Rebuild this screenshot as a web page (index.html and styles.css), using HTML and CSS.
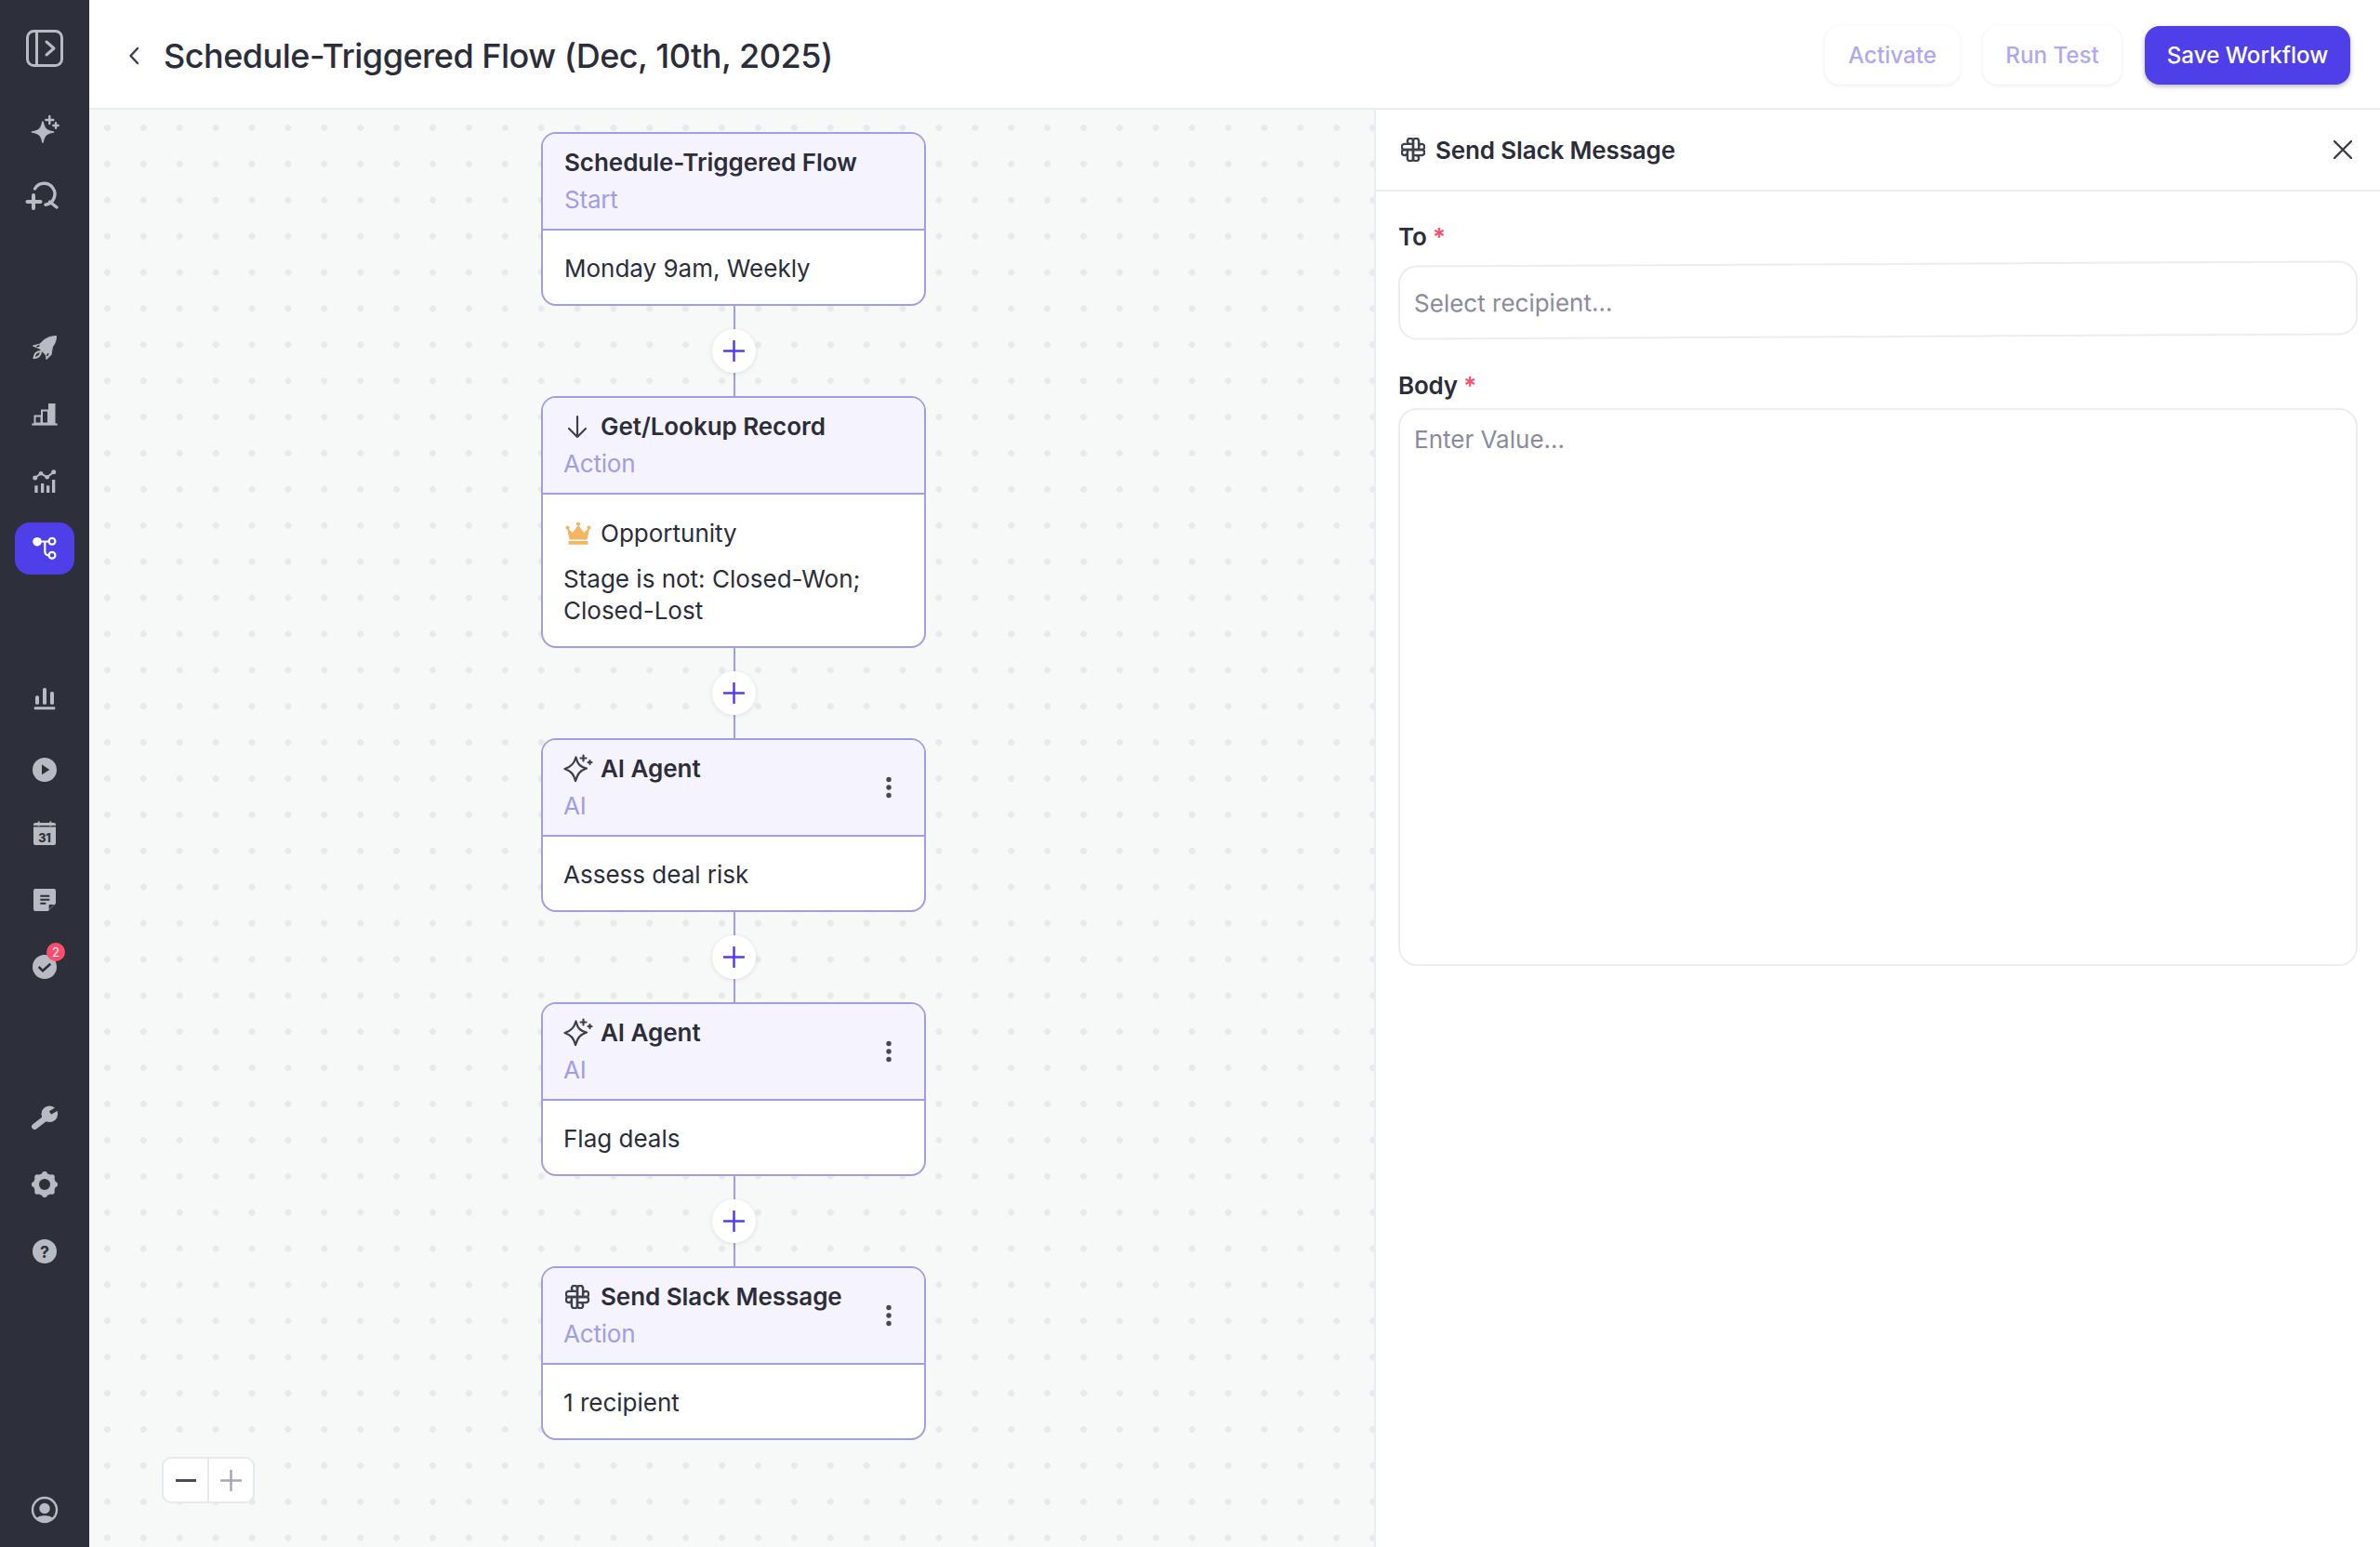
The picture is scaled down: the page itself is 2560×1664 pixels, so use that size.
FILE: index.html
```html
<!DOCTYPE html>
<html lang="en">
<head>
    <meta charset="UTF-8">
    <title>Schedule-Triggered Flow</title>
    <link rel="stylesheet" href="styles.css">
</head>
<body>
    <svg class="defs" width="0" height="0">
        <symbol id="slack" viewBox="3.5 3.5 17 17">
            <g fill="none" stroke="currentColor" stroke-width="1.6" stroke-linecap="round" stroke-linejoin="round">
                <path d="M12 12v-6a2 2 0 0 1 4 0v6m0 -2a2 2 0 1 1 2 2h-6"/>
                <path d="M12 12h6a2 2 0 0 1 0 4h-6m2 0a2 2 0 1 1 -2 2v-6"/>
                <path d="M12 12v6a2 2 0 0 1 -4 0v-6m0 2a2 2 0 1 1 -2 -2h6"/>
                <path d="M12 12h-6a2 2 0 0 1 0 -4h6m-2 0a2 2 0 1 1 2 -2v6"/>
            </g>
        </symbol>
        <symbol id="sparkle" viewBox="0 0 32 32">
            <path d="M13.5 3.5 C15 10 17 13.5 25 15.5 C17.5 18 15.5 21 13 29 C11 21.5 8.5 18.5 1.5 16 C8.5 14 11.5 10.5 13.5 3.5Z" fill="none" stroke="currentColor" stroke-width="2.3" stroke-linejoin="round"/>
            <path d="M21.5 1.5v6M18.5 4.5h6M28.5 7v4M26.5 9h4" fill="none" stroke="currentColor" stroke-width="2.2" stroke-linecap="round"/>
        </symbol>
        <symbol id="kebab" viewBox="0 0 8 24">
            <circle cx="4" cy="3.5" r="2.7"/>
            <circle cx="4" cy="12" r="2.7"/>
            <circle cx="4" cy="20.5" r="2.7"/>
        </symbol>
        <symbol id="plus" viewBox="0 0 24 24">
            <path d="M12 1v22M1 12h22" fill="none" stroke="currentColor" stroke-width="2.6" stroke-linecap="round"/>
        </symbol>
    </svg>

    <aside class="sidebar">
        <button class="toggle">
            <svg class="icon" viewBox="0 0 40 40">
                <rect x="1.5" y="1.5" width="37" height="37" rx="7" fill="none" stroke="#b8bac4" stroke-width="3"/>
                <path d="M11.5 2v36" stroke="#b8bac4" stroke-width="3"/>
                <path d="M22 13l8 7-8 7" fill="none" stroke="#b8bac4" stroke-width="3" stroke-linecap="round" stroke-linejoin="round"/>
            </svg>
        </button>

        <nav class="nav-group group-first">
            <a class="nav-item">
                <svg class="icon" viewBox="0 0 40 40">
                    <path d="M18 9 C19.5 16.5 21.5 18.5 29.5 20 C21.5 21.5 19.5 23.5 18 31 C16.5 23.5 14.5 21.5 6.5 20 C14.5 18.5 16.5 16.5 18 9Z" fill="#b8bac4" stroke="#b8bac4" stroke-width="1.6" stroke-linejoin="round"/>
                    <path d="M25.3 3v8M21.3 7h8M32 10.3v5.4M29.3 13h5.4" stroke="#b8bac4" stroke-width="2.4" stroke-linecap="round"/>
                </svg>
            </a>
            <a class="nav-item">
                <svg class="icon" viewBox="0 0 40 40">
                    <path d="M9.5 9 A11.5 11.5 0 1 1 21 26.2" fill="none" stroke="#b8bac4" stroke-width="3.4" stroke-linecap="round"/>
                    <path d="M25.5 23l7.5 6" stroke="#b8bac4" stroke-width="3.4" stroke-linecap="round"/>
                    <path d="M8 16v14M1.5 23h14" stroke="#b8bac4" stroke-width="4" stroke-linecap="round"/>
                </svg>
            </a>
        </nav>

        <nav class="nav-group">
            <a class="nav-item">
                <svg class="icon" viewBox="0 0 40 40">
                    <path d="M32.5 7.5 C25 7.5 19 11 15 16 L7.5 18 L14.5 21 L21.5 28 L22 32.5 L27 27.5 C28 23 28 21 28.5 19 C31 16 32.5 12 32.5 7.5Z" fill="#b8bac4" stroke="#b8bac4" stroke-linejoin="round"/>
                    <path d="M8.5 31 C9 26 12 24 16 24 C16 28 13 31 8.5 31Z" fill="none" stroke="#b8bac4" stroke-width="2"/>
                    <path d="M14.5 17.5l-3 1.5M24 26l-1.5 3" stroke="#2d2f3b" stroke-width="1.6"/>
                </svg>
            </a>
            <a class="nav-item">
                <svg class="icon" viewBox="0 0 40 40">
                    <rect x="9.5" y="21.5" width="7" height="8" fill="none" stroke="#b8bac4" stroke-width="2"/>
                    <rect x="17" y="15.5" width="7" height="14" fill="none" stroke="#b8bac4" stroke-width="2"/>
                    <rect x="24" y="8" width="7.5" height="22" fill="#b8bac4"/>
                    <path d="M6.3 30.500h27.4" stroke="#b8bac4" stroke-width="2.2"/>
                </svg>
            </a>
            <a class="nav-item">
                <svg class="icon" viewBox="0 0 40 40">
                    <path d="M9.7 16L16 11.3l6.7 4L29.7 9.7" fill="none" stroke="#b8bac4" stroke-width="2"/>
                    <circle cx="9.7" cy="16" r="2.5" fill="#b8bac4"/>
                    <circle cx="16" cy="11.3" r="2.3" fill="#b8bac4"/>
                    <circle cx="22.7" cy="15.3" r="2.3" fill="#b8bac4"/>
                    <circle cx="29.7" cy="9.7" r="2.5" fill="#b8bac4"/>
                    <rect x="9.3" y="24.3" width="3.3" height="7.7" fill="#b8bac4"/>
                    <rect x="16" y="22" width="3.3" height="10" fill="#b8bac4"/>
                    <rect x="22" y="24.3" width="3.3" height="7.7" fill="#b8bac4"/>
                    <rect x="28" y="18" width="3.3" height="14" fill="#b8bac4"/>
                </svg>
            </a>
            <a class="nav-item active">
                <svg class="icon" viewBox="0 0 40 40">
                    <path d="M12 12.5h12.5M20.3 12.5V23c0 3 1.5 4.3 4.3 4.3" fill="none" stroke="#fff" stroke-width="2.2"/>
                    <circle cx="12" cy="12.7" r="4.8" fill="#fff"/>
                    <circle cx="28" cy="12.3" r="3.4" fill="none" stroke="#fff" stroke-width="2.2"/>
                    <circle cx="28" cy="27.3" r="3.4" fill="none" stroke="#fff" stroke-width="2.2"/>
                </svg>
            </a>
        </nav>

        <nav class="nav-group">
            <a class="nav-item">
                <svg class="icon" viewBox="0 0 40 40">
                    <rect x="10" y="16.3" width="4" height="9.4" rx="1.5" fill="#b8bac4"/>
                    <rect x="18" y="8" width="4" height="17.7" rx="1.5" fill="#b8bac4"/>
                    <rect x="26" y="12" width="4" height="13.7" rx="1.5" fill="#b8bac4"/>
                    <rect x="8.7" y="28.2" width="22.6" height="3" rx="1" fill="#b8bac4"/>
                </svg>
            </a>
            <a class="nav-item">
                <svg class="icon" viewBox="0 0 40 40">
                    <circle cx="20" cy="24" r="13" fill="#b8bac4"/>
                    <path d="M17 18.3L25.3 24L17 29.3Z" fill="#2d2f3b"/>
                </svg>
            </a>
            <a class="nav-item">
                <svg class="icon" viewBox="0 0 40 40">
                    <rect x="8" y="9" width="24" height="24" rx="2" fill="#b8bac4"/>
                    <path d="M8 12.7h24" stroke="#2d2f3b" stroke-width="1.5"/>
                    <rect x="12.7" y="7.5" width="2" height="5" fill="#b8bac4"/>
                    <rect x="25.3" y="7.5" width="2" height="5" fill="#b8bac4"/>
                    <text x="20" y="29.5" class="cal-day">31</text>
                </svg>
            </a>
            <a class="nav-item">
                <svg class="icon" viewBox="0 0 40 40">
                    <path d="M10 8h20a2 2 0 0 1 2 2v13.7L23.7 32H10a2 2 0 0 1-2-2V10a2 2 0 0 1 2-2Z" fill="#b8bac4"/>
                    <path d="M15.3 15.7h10M15.3 19.7h10M15.3 23.7h6" stroke="#2d2f3b" stroke-width="2"/>
                    <path d="M24.7 30.5V25H30.2Z" fill="#2d2f3b"/>
                </svg>
            </a>
            <a class="nav-item">
                <svg class="icon" viewBox="0 0 40 40">
                    <circle cx="20" cy="20" r="13" fill="#b8bac4"/>
                    <path d="M13.7 20l4.3 4.3l8.3-7.6" fill="none" stroke="#2d2f3b" stroke-width="2.6"/>
                </svg>
                <span class="badge">2</span>
            </a>
        </nav>

        <nav class="nav-group">
            <a class="nav-item">
                <svg class="icon" viewBox="0 0 40 40">
                    <path d="M9.3 29.7l11-8.4" stroke="#b8bac4" stroke-width="6.4" stroke-linecap="round"/>
                    <circle cx="25.3" cy="16.2" r="8.8" fill="#b8bac4"/>
                    <path d="M26 15l10-6" stroke="#2d2f3b" stroke-width="4.2"/>
                </svg>
            </a>
            <a class="nav-item">
                <svg class="icon" viewBox="0 0 40 40">
                    <g fill="#b8bac4">
                        <circle cx="20" cy="20" r="12"/>
                        <circle cx="31" cy="20" r="3"/>
                        <circle cx="27.8" cy="27.8" r="3"/>
                        <circle cx="20" cy="31" r="3"/>
                        <circle cx="12.2" cy="27.8" r="3"/>
                        <circle cx="9" cy="20" r="3"/>
                        <circle cx="12.2" cy="12.2" r="3"/>
                        <circle cx="20" cy="9" r="3"/>
                        <circle cx="27.8" cy="12.2" r="3"/>
                    </g>
                    <circle cx="20" cy="20" r="6" fill="#2d2f3b"/>
                </svg>
            </a>
            <a class="nav-item">
                <svg class="icon" viewBox="0 0 40 40">
                    <circle cx="20" cy="20" r="13" fill="#b8bac4"/>
                    <text x="20" y="26.5" class="help-mark">?</text>
                </svg>
            </a>
        </nav>

        <a class="nav-item profile">
            <svg class="icon" viewBox="0 0 40 40">
                <circle cx="20" cy="20" r="13" fill="none" stroke="#b8bac4" stroke-width="2.4"/>
                <circle cx="20" cy="18.5" r="5.7" fill="#b8bac4"/>
                <path d="M11 29.5C13 25 27 25 29 29.5C25 34 15 34 11 29.5Z" fill="#b8bac4"/>
            </svg>
        </a>
    </aside>

    <div class="main">
        <header class="topbar">
            <div class="topbar-title">
                <svg class="back" viewBox="0 0 12 20">
                    <path d="M10 2L2.5 10L10 18" fill="none" stroke="currentColor" stroke-width="2.4" stroke-linecap="round" stroke-linejoin="round"/>
                </svg>
                <h1>Schedule-Triggered Flow (Dec, 10th, 2025)</h1>
            </div>
            <div class="topbar-actions">
                <button class="btn btn-ghost btn-activate">Activate</button>
                <button class="btn btn-ghost btn-run">Run Test</button>
                <button class="btn btn-primary">Save Workflow</button>
            </div>
        </header>

        <div class="content">
            <section class="canvas">
                <div class="flow">
                    <div class="node">
                        <div class="node-head node-head-start">
                            <div class="node-info">
                                <div class="node-title">Schedule-Triggered Flow</div>
                                <div class="node-type">Start</div>
                            </div>
                        </div>
                        <div class="node-body node-body-start">Monday 9am, Weekly</div>
                    </div>
                    <div class="connector"><span class="add"><svg><use href="#plus"/></svg></span></div>

                    <div class="node">
                        <div class="node-head">
                            <div class="node-info">
                                <div class="node-title">
                                    <span class="node-icon">
                                        <svg class="arrow" viewBox="0 0 24 26" width="24" height="26">
                                            <path d="M12 2v22M3 15l9 9l9-9" fill="none" stroke="currentColor" stroke-width="2.2" stroke-linecap="round" stroke-linejoin="round"/>
                                        </svg>
                                    </span>
                                    Get/Lookup Record
                                </div>
                                <div class="node-type">Action</div>
                            </div>
                        </div>
                        <div class="node-body tall">
                            <div class="object-row">
                                <span class="node-icon">
                                    <svg viewBox="0 0 28 26" width="28" height="26">
                                        <path d="M2.5 7.5L8 12.5L14 4.5L20 12.5L25.5 7.5L23 19H5Z" fill="#f3b562" stroke="#f3b562" stroke-linejoin="round"/>
                                        <circle cx="2.5" cy="6.5" r="2.1" fill="#f3b562"/>
                                        <circle cx="14" cy="2.7" r="2.1" fill="#f3b562"/>
                                        <circle cx="25.5" cy="6.5" r="2.1" fill="#f3b562"/>
                                        <rect x="3.5" y="21" width="21" height="3.8" rx="1" fill="#f3b562"/>
                                    </svg>
                                </span>
                                Opportunity
                            </div>
                            <div>Stage is not: Closed-Won; Closed-Lost</div>
                        </div>
                    </div>
                    <div class="connector"><span class="add"><svg><use href="#plus"/></svg></span></div>

                    <div class="node">
                        <div class="node-head">
                            <div class="node-info">
                                <div class="node-title">
                                    <span class="node-icon"><svg class="spark"><use href="#sparkle"/></svg></span>
                                    AI Agent
                                </div>
                                <div class="node-type">AI</div>
                            </div>
                            <svg class="kebab"><use href="#kebab"/></svg>
                        </div>
                        <div class="node-body">Assess deal risk</div>
                    </div>
                    <div class="connector"><span class="add"><svg><use href="#plus"/></svg></span></div>

                    <div class="node">
                        <div class="node-head">
                            <div class="node-info">
                                <div class="node-title">
                                    <span class="node-icon"><svg class="spark"><use href="#sparkle"/></svg></span>
                                    AI Agent
                                </div>
                                <div class="node-type">AI</div>
                            </div>
                            <svg class="kebab"><use href="#kebab"/></svg>
                        </div>
                        <div class="node-body">Flag deals</div>
                    </div>
                    <div class="connector"><span class="add"><svg><use href="#plus"/></svg></span></div>

                    <div class="node">
                        <div class="node-head">
                            <div class="node-info">
                                <div class="node-title">
                                    <span class="node-icon"><svg class="slack"><use href="#slack"/></svg></span>
                                    Send Slack Message
                                </div>
                                <div class="node-type">Action</div>
                            </div>
                            <svg class="kebab"><use href="#kebab"/></svg>
                        </div>
                        <div class="node-body">1 recipient</div>
                    </div>
                </div>

                <div class="zoom-control">
                    <button class="zoom-btn"><span class="zoom-minus"></span></button>
                    <button class="zoom-btn zoom-in"><svg><use href="#plus"/></svg></button>
                </div>
            </section>

            <aside class="panel">
                <div class="panel-head">
                    <div class="panel-title">
                        <svg class="slack"><use href="#slack"/></svg>
                        Send Slack Message
                    </div>
                    <svg class="close" viewBox="0 0 20 20">
                        <path d="M1 1l18 18M19 1L1 19" fill="none" stroke="currentColor" stroke-width="2.4" stroke-linecap="round"/>
                    </svg>
                </div>
                <div class="panel-body">
                    <div class="field">
                        <label class="field-label">To <span class="req">*</span></label>
                        <input class="input" type="text" placeholder="Select recipient...">
                    </div>
                    <div class="field field-body">
                        <label class="field-label">Body <span class="req">*</span></label>
                        <textarea class="textarea" placeholder="Enter Value..."></textarea>
                    </div>
                </div>
            </aside>
        </div>
    </div>
</body>
</html>
```

FILE: styles.css
```css
* {
    box-sizing: border-box;
}
html, body {
    margin: 0;
    height: 100%;
}
body {
    font-family: Inter, "Liberation Sans", sans-serif;
    font-size: 26px;
    color: #2b2d3a;
    height: 1664px;
    display: flex;
    overflow: hidden;
    background-color: #fff;
}
.defs {
    position: absolute;
}

/* left rail */
.sidebar {
    width: 96px;
    flex: none;
    background-color: #2d2f3b;
    display: flex;
    flex-direction: column;
    align-items: center;
    padding: 32px 0 12px;
}
.toggle {
    width: 40px;
    height: 40px;
    padding: 0;
    border: none;
    background: none;
}
.icon {
    width: 40px;
    height: 40px;
    display: block;
    overflow: visible;
}
.nav-group {
    display: flex;
    flex-direction: column;
    gap: 16px;
    margin-top: 106px;
}
.group-first {
    margin-top: 42px;
}
.group-first + .nav-group {
    margin-top: 104px;
}
.nav-item {
    position: relative;
    width: 64px;
    height: 56px;
    border-radius: 16px;
    display: flex;
    align-items: center;
    justify-content: center;
}
.nav-item.active {
    background-color: #4f3fe8;
}
.profile {
    margin-top: auto;
}
.badge {
    position: absolute;
    top: 2px;
    left: 34px;
    width: 20px;
    height: 20px;
    border-radius: 50%;
    background-color: #ff4d6d;
    color: #fff;
    font-size: 13px;
    line-height: 20px;
    text-align: center;
}
.cal-day {
    font-family: Inter, sans-serif;
    font-size: 12.5px;
    font-weight: 800;
    fill: #2d2f3b;
    text-anchor: middle;
}
.help-mark {
    font-family: Inter, sans-serif;
    font-size: 18px;
    font-weight: 700;
    fill: #2d2f3b;
    text-anchor: middle;
}

/* top bar */
.main {
    flex: 1;
    min-width: 0;
    display: flex;
    flex-direction: column;
}
.topbar {
    height: 118px;
    flex: none;
    border-bottom: 2px solid #ebecf0;
    display: flex;
    align-items: center;
    justify-content: space-between;
    padding: 3px 32px 0 42px;
}
.topbar-title {
    display: flex;
    align-items: center;
    gap: 26px;
}
.back {
    width: 12px;
    height: 20px;
    color: #3a3c4a;
}
.topbar h1 {
    margin: 0;
    font-size: 36px;
    font-weight: 500;
    letter-spacing: -0.5px;
    color: #2b2d3a;
}
.topbar-actions {
    display: flex;
    gap: 25px;
}
.btn {
    height: 63px;
    border: none;
    border-radius: 16px;
    font-family: inherit;
    font-size: 24.2px;
    font-weight: 500;
}
.btn-ghost {
    background-color: #fff;
    color: #afa8f5;
    box-shadow: 0 1px 4px rgba(45, 47, 59, 0.1);
}
.btn-activate {
    width: 145px;
}
.btn-run {
    width: 149px;
}
.btn-primary {
    width: 221px;
    background-color: #4f3fe8;
    color: #fff;
    box-shadow: 0 2px 5px rgba(45, 47, 59, 0.35);
}

/* canvas */
.content {
    flex: 1;
    min-height: 0;
    display: flex;
}
.canvas {
    position: relative;
    flex: 1;
    min-width: 0;
    background-color: #f7f8f8;
    background-image: radial-gradient(circle, #e8e9ec 3.2px, transparent 3.7px);
    background-size: 38.9px 38.9px;
}
.flow {
    width: 414px;
    margin: 24px 0 0 486px;
}
.node {
    border: 2px solid #a09cea;
    border-radius: 16px;
    overflow: hidden;
    background-color: #fff;
}
.node-head {
    height: 104px;
    padding: 11px 22px;
    background-color: #f5f3fe;
    border-bottom: 2px solid #a09cea;
    display: flex;
    align-items: center;
    justify-content: space-between;
}
.node-head-start {
    padding-left: 23px;
}
.node-title {
    display: flex;
    align-items: center;
    font-weight: 600;
    letter-spacing: -0.05px;
    line-height: 40px;
}
.node-type {
    color: #a09cea;
    letter-spacing: -0.2px;
    line-height: 40px;
}
.node-icon {
    width: 40px;
    flex: none;
    display: flex;
    color: #3e4050;
}
.node-icon svg {
    margin-left: 2px;
}
.node-icon .arrow {
    margin-left: 3px;
}
.node-icon .spark {
    width: 32px;
    height: 32px;
    margin-left: 0;
}
.node-icon .slack {
    width: 26px;
    height: 26px;
}
.kebab {
    width: 8px;
    height: 24px;
    margin-right: 12px;
    fill: #454757;
}
.node-body {
    padding: 24px 22px 21px;
    line-height: 34px;
}
.node-body-start {
    padding-left: 23px;
}
.node-body.tall {
    padding-top: 21px;
    padding-bottom: 21px;
}
.object-row {
    display: flex;
    align-items: center;
    height: 41px;
    margin-bottom: 12px;
}
.connector {
    position: relative;
    height: 97px;
    display: flex;
    align-items: center;
    justify-content: center;
}
.connector::before {
    content: "";
    position: absolute;
    top: 0;
    bottom: 0;
    left: 207px;
    width: 2px;
    background-color: #a09cea;
}
.add {
    position: relative;
    width: 47px;
    height: 47px;
    border-radius: 50%;
    background-color: #fff;
    box-shadow: 0 1px 5px rgba(45, 47, 59, 0.12);
    color: #4f3fe8;
    display: flex;
    align-items: center;
    justify-content: center;
}
.add svg {
    width: 23px;
    height: 23px;
}
.zoom-control {
    position: absolute;
    left: 78px;
    top: 1449px;
    width: 100px;
    height: 50px;
    display: flex;
    background-color: #fff;
    border: 2px solid #e8e9ee;
    border-radius: 10px;
}
.zoom-btn {
    flex: 1;
    padding: 0;
    border: none;
    background: none;
    display: flex;
    align-items: center;
    justify-content: center;
}
.zoom-in {
    border-left: 2px solid #e8e9ee;
    color: #a6a7b0;
}
.zoom-in svg {
    width: 23px;
    height: 23px;
}
.zoom-minus {
    width: 22px;
    height: 3px;
    background-color: #4a4c5b;
}

/* side panel */
.panel {
    width: 1082px;
    flex: none;
    background-color: #fff;
    border-left: 2px solid #ebecf0;
}
.panel-head {
    height: 88px;
    border-bottom: 2px solid #ebecf0;
    display: flex;
    align-items: center;
    justify-content: space-between;
    padding: 0 30px 0 27px;
}
.panel-title {
    display: flex;
    align-items: center;
    gap: 11px;
    font-weight: 600;
    letter-spacing: -0.15px;
    color: #2b2d3a;
}
.panel-title .slack {
    width: 26px;
    height: 26px;
    color: #3e4050;
}
.close {
    width: 20px;
    height: 20px;
    color: #3a3c4a;
}
.panel-body {
    padding: 29px 24px 0;
}
.field-label {
    display: block;
    font-weight: 600;
    letter-spacing: -0.2px;
    line-height: 40px;
    margin-bottom: 8px;
}
.req {
    color: #ff4d6d;
}
.input, .textarea {
    display: block;
    width: 100%;
    border: 2px solid #ebecf0;
    border-radius: 20px;
    background-color: #fff;
    font-family: inherit;
    font-size: 26px;
    color: #2b2d3a;
    padding: 0 15px;
    outline: none;
}
.input::placeholder, .textarea::placeholder {
    color: #8a8b9c;
    opacity: 1;
}
.input {
    height: 80px;
    transform: rotate(-0.3deg);
}
.field-body {
    margin-top: 32px;
}
.field-body .field-label {
    margin-bottom: 4px;
}
.textarea {
    height: 600px;
    padding-top: 15px;
    line-height: 34px;
    resize: none;
}
```
